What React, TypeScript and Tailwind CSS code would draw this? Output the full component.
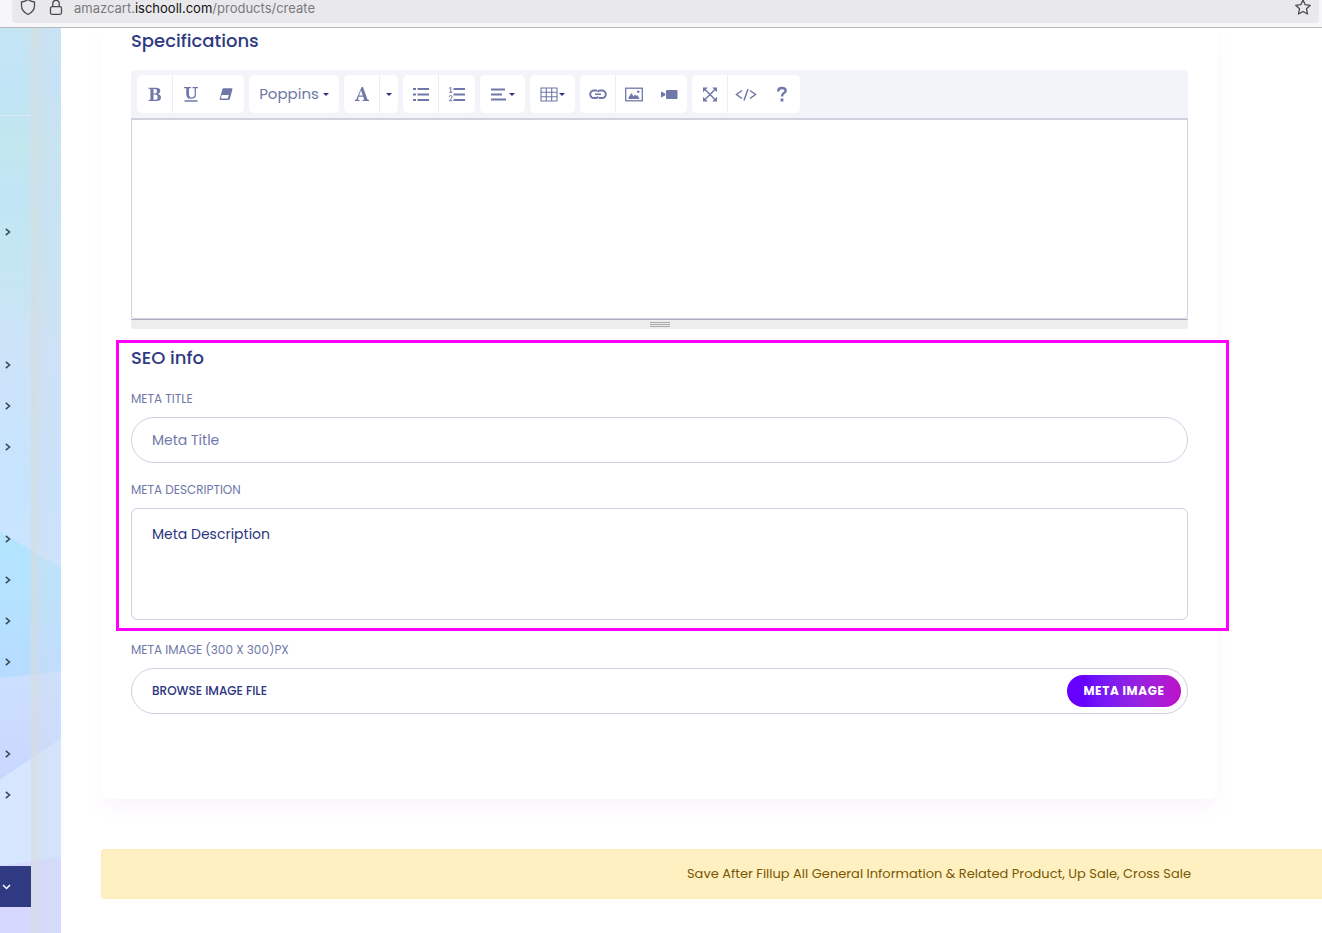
import React from "react";

type IconProps = { children: React.ReactNode; w?: number; h?: number };

function Glyph({ children, w = 18, h = 18 }: IconProps) {
  return (
    <svg width={w} height={h} viewBox={`0 0 ${w} ${h}`} fill="none" stroke="currentColor" aria-hidden="true">
      {children}
    </svg>
  );
}

function Caret() {
  return (
    <svg width="6" height="3" viewBox="0 0 6 3" aria-hidden="true">
      <path d="M0 0h6L3 3z" fill="#2c3480" />
    </svg>
  );
}

function Group({ children }: { children: React.ReactNode }) {
  return <div className="flex h-[38px] shrink-0 overflow-hidden rounded-[5px] bg-white">{children}</div>;
}

function Tool({
  label,
  className = "w-9",
  children,
}: {
  label: string;
  className?: string;
  children: React.ReactNode;
}) {
  return (
    <button type="button" aria-label={label} className={`flex items-center justify-center ${className}`}>
      {children}
    </button>
  );
}

function Toolbar() {
  return (
    <div className="flex h-12 items-center gap-[5px] rounded-t-[5px] bg-[#f3f4fa] pl-1.5 text-[#6f78a8]">
      <Group>
        <Tool label="Bold" className="w-9 border-r border-[#eceef7]">
          <Glyph w={16}>
            <path d="M1.500 2.800h7.500q4.300 0 4.300 3.200 0 2.400-2.600 3 3.300.5 3.300 3.500 0 3.500-4.700 3.500H1.500v-.9l1.900-.4V4.100l-1.900-.4zM6.500 3.900v4.600h1.300q2.200 0 2.200-2.300 0-2.300-2.200-2.300zM6.500 9.600v5.200h1.600q2.500 0 2.500-2.600 0-2.600-2.600-2.600z" fill="currentColor" fillRule="evenodd" stroke="none" />
          </Glyph>
        </Tool>
        <Tool label="Underline">
          <Glyph w={16}>
            <path d="M1 2.700h7M9.500 2.700h5.500" strokeWidth="1.200" />
            <path d="M4.300 3v6.500c0 2.600 1.400 3.700 4 3.700s4-1.200 4-3.700V3" strokeWidth="1.300" />
            <path d="M4.700 3v6.500c0 1.700.6 2.700 1.800 3.200" strokeWidth="2.600" />
            <path d="M1.500 16h13" strokeWidth="1.300" />
          </Glyph>
        </Tool>
        <Tool label="Remove font style" className="w-[35px] pr-px">
          <Glyph w={16}>
            <path d="M5.500 3.300h8q1.200 0 .9 1.100l-2.500 9.400q-.3 1.200-1.500 1.200H2.600q-1.300 0-.9-1.300L4.300 4.400q.3-1.100 1.200-1.100z" fill="currentColor" stroke="none" />
            <path d="M3.700 9.900h7.100l-1 3.700H2.800z" fill="white" stroke="none" />
          </Glyph>
        </Tool>
      </Group>
      <Group>
        <Tool label="Font family" className="w-[90px] gap-1">
          <span className="text-[15px] leading-6">Poppins</span>
          <Caret />
        </Tool>
      </Group>
      <Group>
        <Tool label="Recent color" className="w-9 border-r border-[#eceef7]">
          <Glyph w={16}>
            <path d="M7.600 2h1.300l4.600 12.600 1.500.5v.9H8.600v-.9l1.600-.5-1-2.900H4.700l-.9 2.800 1.700.6v.9H.8v-.9l1.500-.5zM7 5.300l-1.900 5.300h3.700z" fill="currentColor" fillRule="evenodd" stroke="none" />
          </Glyph>
        </Tool>
        <Tool label="More color" className="w-[18px]">
          <Caret />
        </Tool>
      </Group>
      <Group>
        <Tool label="Unordered list" className="w-9 border-r border-[#eceef7]">
          <Glyph>
            <path d="M1 4h3M1 9.500h3M1 15h3M5.500 4H17M5.500 9.500H17M5.500 15H17" strokeWidth="2.200" />
          </Glyph>
        </Tool>
        <Tool label="Ordered list">
          <Glyph>
            <path d="M5.500 4H17M5.500 9.500H17M5.500 15H17" strokeWidth="2.200" />
            <path d="M1.300 3.300 2.800 2.300v5M1.300 7.300h3M1.200 11.900q.2-1.400 1.500-1.400 1.400 0 1.400 1.200 0 1-2.800 4.100h3.100" strokeWidth="1" />
          </Glyph>
        </Tool>
      </Group>
      <Group>
        <Tool label="Paragraph" className="w-[45px] gap-0.5">
          <Glyph w={16}>
            <path d="M0 4.500h14M0 9.500h11M0 14.500h15" strokeWidth="1.900" />
          </Glyph>
          <Caret />
        </Tool>
      </Group>
      <Group>
        <Tool label="Table" className="w-[45px] gap-px pr-px">
          <Glyph>
            <path d="M1 3h16v13H1zM1 7.300h16M1 11.700h16M6.300 3v13M11.700 3v13" strokeWidth="1.100" />
          </Glyph>
          <Caret />
        </Tool>
      </Group>
      <Group>
        <Tool label="Link" className="w-9 border-r border-[#eceef7]">
          <Glyph>
            <path d="M8 5.500H5a3.800 3.800 0 0 0 0 7.600h2q1.700 0 2.500-1.300M10 13.100h3a3.800 3.800 0 0 0 0-7.600h-2q-1.700 0-2.500 1.300" strokeWidth="2" />
            <path d="M6 9.300h6" strokeWidth="1.600" />
          </Glyph>
        </Tool>
        <Tool label="Picture">
          <Glyph>
            <rect x=".7" y="3.200" width="16.600" height="12.600" strokeWidth="1.300" />
            <path d="M3.500 14v-1.500l3-4.500 2 3.500 1.500-2 1.500 1.500 1-1 2 4z" fill="currentColor" stroke="none" />
            <circle cx="13.300" cy="6.800" r="1.200" fill="currentColor" stroke="none" />
          </Glyph>
        </Tool>
        <Tool label="Video" className="w-[35px] pr-0.5">
          <Glyph>
            <rect x="6" y="5" width="11.500" height="9" rx="1" fill="currentColor" stroke="none" />
            <path d="M1 6.500 5.200 8.500v2L1 12.500z" fill="currentColor" stroke="none" />
          </Glyph>
        </Tool>
      </Group>
      <Group>
        <Tool label="Full screen" className="w-9 border-r border-[#eceef7]">
          <Glyph w={16}>
            <path d="m3 4.500 10 10M13 4.500l-10 10" strokeWidth="1.500" />
            <path d="M1 2.500h4.800L1 7.300zM15 2.500v4.800l-4.800-4.800zM1 16.500v-4.800l4.800 4.800zM15 16.500h-4.800l4.800-4.800z" fill="currentColor" stroke="none" />
          </Glyph>
        </Tool>
        <Tool label="Code view">
          <Glyph w={22}>
            <path d="M7 5.500 1.500 9.500 7 13.500M15 5.500l5.500 4-5.500 4M13 4 9 15.500" strokeWidth="1.500" />
          </Glyph>
        </Tool>
        <Tool label="Help">
          <Glyph w={12}>
            <path d="M2.300 6.500V6q0-3 3.600-3 3.800 0 3.800 2.700 0 1.300-1.800 2.400Q6 9.300 6 11.500" strokeWidth="2.400" />
            <path d="M6 13.500v3" strokeWidth="2.800" />
          </Glyph>
        </Tool>
      </Group>
    </div>
  );
}

function MenuRow({ label }: { label: string }) {
  return (
    <button type="button" aria-label={label} className="flex h-[41px] w-full items-center pl-[5px] text-[#3c4a55]">
      <svg width="6" height="8" viewBox="0 0 6 8" fill="none" stroke="currentColor" strokeWidth="1.600" aria-hidden="true">
        <path d="m.8.800 3.700 3.200L.8 7.200" />
      </svg>
    </button>
  );
}

function MenuBlock({ labels }: { labels: string[] }) {
  return (
    <div>
      {labels.map((label) => (
        <MenuRow key={label} label={label} />
      ))}
    </div>
  );
}

function Sidebar() {
  return (
    <aside className="relative w-[61px] shrink-0 overflow-hidden">
      <svg className="absolute inset-0 h-full w-full" viewBox="0 0 61 905" preserveAspectRatio="none" aria-hidden="true">
        <defs>
          <linearGradient id="sky" x1="0" y1="0" x2="0" y2="1">
            <stop offset="0" stopColor="#c5e5f4" />
            <stop offset=".1" stopColor="#c1e4f6" />
            <stop offset=".22" stopColor="#c2e7ee" />
            <stop offset=".3" stopColor="#c1e5f5" />
            <stop offset=".45" stopColor="#c5e6f2" />
            <stop offset=".58" stopColor="#cde3f8" />
            <stop offset=".85" stopColor="#c6e4ff" />
            <stop offset="1" stopColor="#cbe5ff" />
          </linearGradient>
          <linearGradient id="aqua" x1="0" y1="0" x2="0" y2="1">
            <stop offset="0" stopColor="#b3e5ff" />
            <stop offset=".45" stopColor="#b4e2ff" />
            <stop offset="1" stopColor="#b7dbff" />
          </linearGradient>
          <linearGradient id="haze" x1="0" y1="0" x2="0" y2="1">
            <stop offset="0" stopColor="#cde0ff" />
            <stop offset="1" stopColor="#c8d7ff" />
          </linearGradient>
          <linearGradient id="edge" x1="0" y1="0" x2="1" y2="0">
            <stop offset="0" stopColor="#d9dbd8" stopOpacity=".75" />
            <stop offset=".3" stopColor="#d2dce8" stopOpacity=".45" />
            <stop offset="1" stopColor="#cfe0fb" stopOpacity=".35" />
          </linearGradient>
        </defs>
        <path d="M0 0h61v545H0z" fill="url(#sky)" />
        <path d="M0 504l61 36v110H0z" fill="url(#aqua)" />
        <path d="M0 650l61-7v68L0 752z" fill="url(#haze)" />
        <path d="M0 752l61-41v140H0z" fill="#d6e6ff" />
        <path d="M0 838l61-9v76H0z" fill="#d7d8ff" />
        <path d="M31 0h30v905H31z" fill="url(#edge)" />
      </svg>
      <nav className="relative w-[31px]">
        <div className="mb-[95px] h-[88px] border-b border-[#dbeaf4]" />
        <MenuBlock labels={["Dashboard"]} />
        <div className="mt-[92px] flex flex-col gap-[51px]">
          <MenuBlock labels={["Customers", "Wallet", "Contact"]} />
          <MenuBlock labels={["Appearance", "Blog", "Marketing", "Gift card"]} />
          <MenuBlock labels={["Orders", "Refunds"]} />
          <button type="button" aria-label="Products" className="flex h-[41px] w-full items-center bg-[#2f3a82] pl-0.5 text-white">
            <svg width="9" height="6" viewBox="0 0 9 6" fill="none" stroke="currentColor" strokeWidth="1.500" aria-hidden="true">
              <path d="m1 1 3.500 3.500L8 1" />
            </svg>
          </button>
        </div>
      </nav>
    </aside>
  );
}

function AddressBar() {
  return (
    <header className="h-7 border-b border-[#b9b9bb] bg-[#f7f7f9] pr-[3px] pl-3">
      <div className="flex h-[23px] items-start rounded-b bg-[#e9e9eb] pr-2 pl-2 text-[#4a4a4f]">
        <svg width="16" height="16" viewBox="0 0 16 16" fill="none" stroke="currentColor" strokeWidth="1.300" aria-hidden="true">
          <path d="M8-.5Q5.500 1.500 1.500 2v3.500Q1.500 11.500 8 14.500q6.500-3 6.500-9V2Q10.500 1.500 8-.5z" />
        </svg>
        <svg className="ml-3" width="16" height="16" viewBox="0 0 16 16" fill="none" stroke="currentColor" strokeWidth="1.300" aria-hidden="true">
          <rect x="2.500" y="6.700" width="11" height="7.600" rx="1.500" />
          <path d="M4.800 6.500V3.500a3.200 3.200 0 0 1 6.400 0v3" />
        </svg>
        <p className="ml-2.5 flex-1 font-[Inter,sans-serif] text-[13px] leading-4 text-[#7a7a7e]">
          amazcart.<span className="text-[#111114]">ischooll.com</span>/products/create
        </p>
        <svg width="16" height="16" viewBox="0 0 16 16" fill="none" stroke="currentColor" strokeWidth="1.300" strokeLinejoin="round" aria-hidden="true">
          <path d="m8 0 2.200 4.700 5.100.600-3.800 3.500 1 5.200L8 11.500 3.500 14l1-5.200L.7 5.300l5.100-.6z" />
        </svg>
      </div>
    </header>
  );
}

const labelClass = "mb-[9px] block text-[12px] leading-[18px] text-[#6f78a8] uppercase";
const headingClass = "text-[18px] leading-[26px] font-medium text-[#2f3a82]";

export default function App() {
  return (
    <div className="flex min-h-screen flex-col overflow-x-hidden bg-white font-[Poppins,Inter,sans-serif] text-[#2c3480]">
      <AddressBar />
      <div className="flex flex-1">
        <Sidebar />
        <main className="min-w-0 flex-1 pb-[34px] pl-10">
          <form className="mr-[104px] rounded-b-[10px] bg-white px-[30px] pb-[85px] shadow-[0_10px_15px_rgba(236,208,244,0.2)]">
            <h2 className={`mb-4 ${headingClass}`}>Specifications</h2>
            <Toolbar />
            <textarea
              aria-label="Specifications"
              className="block h-[201px] w-full resize-none rounded-b-[4px] border border-t-2 border-[#cfd1dd] bg-white p-2.5 outline-none"
            />
            <div className="mb-4 flex h-[10px] flex-col items-center gap-px rounded-b-[4px] border-t border-[#adabc0] bg-[#ededed] pt-0.5">
              <div className="h-px w-5 bg-[#a9a9a9]" />
              <div className="h-px w-5 bg-[#a9a9a9]" />
              <div className="h-px w-5 bg-[#a9a9a9]" />
            </div>

            <section className="relative mb-[21px]">
              <div className="pointer-events-none absolute -top-[5px] -right-[41px] -bottom-[11px] -left-[15px] border-3 border-[#ff00ff]" />
              <h2 className={`mb-[19px] ${headingClass}`}>SEO info</h2>
              <label htmlFor="meta-title" className={labelClass}>
                Meta Title
              </label>
              <input
                id="meta-title"
                type="text"
                placeholder="Meta Title"
                className="mb-[18px] block h-[46px] w-full rounded-full border border-[#cfd0e0] px-5 text-sm outline-none placeholder:text-[#6f78a8]"
              />
              <label htmlFor="meta-description" className={labelClass}>
                Meta Description
              </label>
              <textarea
                id="meta-description"
                placeholder="Meta Description"
                className="block h-28 w-full resize-none rounded-[6px] border border-[#cfd0e0] px-5 py-[15px] text-sm leading-5 outline-none placeholder:text-[#2c3480]"
              />
            </section>

            <label htmlFor="meta-image" className={labelClass}>
              Meta Image (300 x 300)px
            </label>
            <div className="flex h-[46px] items-center rounded-full border border-[#cfd0e0] pr-1.5 pl-5">
              <input
                id="meta-image"
                type="text"
                readOnly
                placeholder="BROWSE IMAGE FILE"
                className="min-w-0 flex-1 text-[12px] font-medium outline-none placeholder:text-[#2c3480]"
              />
              <button
                type="button"
                className="h-8 w-[114px] rounded-full bg-linear-to-r from-[#6600ff] from-15% to-[#bd0fc9] text-[12px] font-bold tracking-wider text-white"
              >
                META IMAGE
              </button>
            </div>
          </form>

          <div
            role="alert"
            className="mt-[50px] rounded-l border border-r-0 border-[#ffeab5] bg-[#fff0c2] py-3 pr-[131px] text-right text-[13px] leading-6 text-[#7a5700]"
          >
            Save After Fillup All General Information &amp; Related Product, Up Sale, Cross Sale
          </div>
        </main>
      </div>
    </div>
  );
}
